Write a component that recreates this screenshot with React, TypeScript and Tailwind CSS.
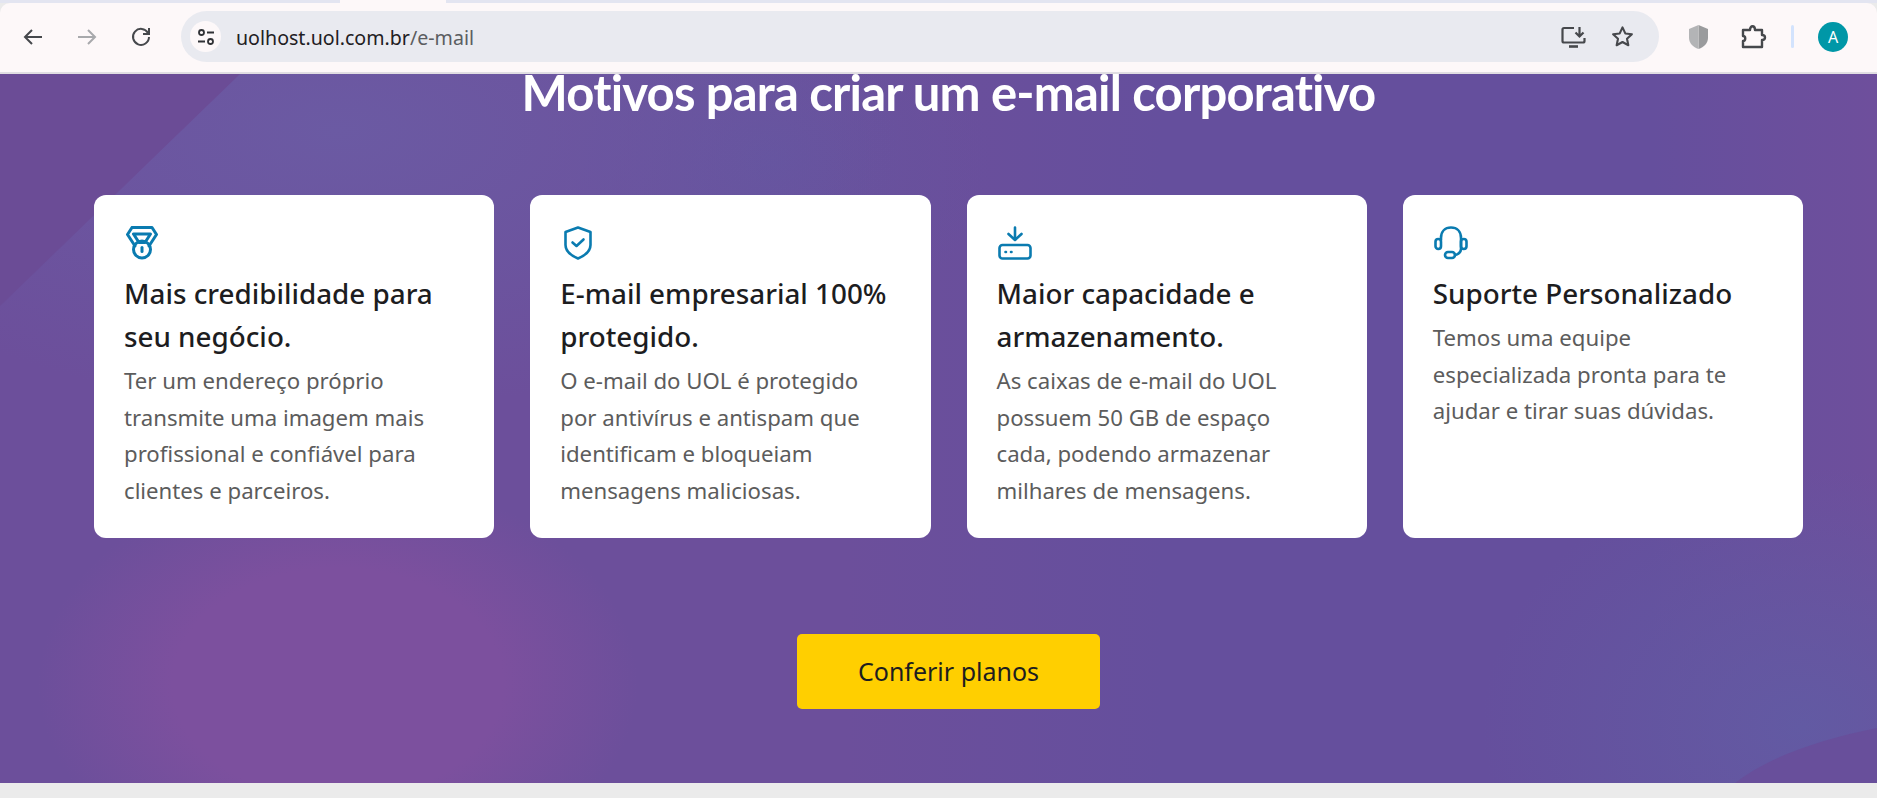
const cards = [
  {
    icon: "medal",
    title: "Mais credibilidade para\nseu negócio.",
    text: "Ter um endereço próprio\ntransmite uma imagem mais\nprofissional e confiável para\nclientes e parceiros.",
  },
  {
    icon: "shield",
    title: "E-mail empresarial 100%\nprotegido.",
    text: "O e-mail do UOL é protegido\npor antivírus e antispam que\nidentificam e bloqueiam\nmensagens maliciosas.",
  },
  {
    icon: "storage",
    title: "Maior capacidade e\narmazenamento.",
    text: "As caixas de e-mail do UOL\npossuem 50 GB de espaço\ncada, podendo armazenar\nmilhares de mensagens.",
  },
  {
    icon: "headset",
    title: "Suporte Personalizado",
    text: "Temos uma equipe\nespecializada pronta para te\najudar e tirar suas dúvidas.",
  },
];

const CardIcon = ({ name }: { name: string }) => {
  if (name === "medal") {
    return (
      <svg className="ml-[1px]" width="34" height="34" viewBox="0 0 34 34" fill="none" stroke="#0a7bb0" strokeWidth="3" strokeLinejoin="round" strokeLinecap="round">
        <path d="M7 1.500h20l4.500 7-7.500 11.500M10 20 2.500 8.500 7 1.500M8.500 8h17L20 16.500h-6z" />
        <circle cx="17" cy="23.500" r="8.500" />
        <path d="M17 21.500v4" />
      </svg>
    );
  }
  if (name === "shield") {
    return (
      <svg className="ml-[4px]" width="28" height="34" viewBox="0 0 28 34" fill="none" stroke="#0a7bb0" strokeWidth="2.600" strokeLinejoin="round" strokeLinecap="round">
        <path d="M14 1.500 26.500 6v13c0 6.500-5.500 10.500-12.500 13.500C7 29.500 1.500 25.500 1.500 19V6z" />
        <path d="m8.500 16.500 4 3.500 7-6.500" />
      </svg>
    );
  }
  if (name === "storage") {
    return (
      <svg className="ml-[1px]" width="34" height="34" viewBox="0 0 34 34" fill="none" stroke="#0a7bb0" strokeWidth="2.600" strokeLinejoin="round" strokeLinecap="round">
        <rect x="1.500" y="19" width="31" height="13.500" rx="3" />
        <path d="M17 1.500V13M10.500 8l6.500 6 6.500-6" />
        <path d="M7.500 26h.5M13 26h.5" />
      </svg>
    );
  }
  return (
    <svg className="ml-[1px]" width="34" height="34" viewBox="0 0 34 34" fill="none" stroke="#0a7bb0" strokeWidth="2.600" strokeLinejoin="round" strokeLinecap="round">
      <path d="M7 14v-2C7 5.500 11 1.500 17 1.500S27 5.500 27 12v11c0 3-3 5.500-6 6" />
      <rect x="1.500" y="13" width="5.500" height="10" rx="2.750" />
      <rect x="27" y="13" width="5.500" height="10" rx="2.750" />
      <rect x="11" y="26" width="10" height="6" rx="3" />
    </svg>
  );
};

export default function App() {
  return (
    <div className="flex h-screen flex-col overflow-hidden bg-[#ebebeb] font-['Noto_Sans',sans-serif]">
      {/* browser chrome */}
      <div className="relative h-[3px] bg-[#e3e5f1]">
        <div className="absolute left-[340px] top-0 h-[3px] w-[106px] bg-[#fdf8f9]" />
      </div>
      <header className="flex h-[71px] items-center rounded-t-[10px] border-b-2 border-[#e0dde2] bg-[#fdf8f9] pb-[2px]">
        <div className="flex w-[181px] items-center pl-[21px] text-[#46484c]">
          <svg width="24" height="24" viewBox="0 0 24 24" fill="none" stroke="currentColor" strokeWidth="2">
            <path d="M21 12H4M11 5l-7 7 7 7" />
          </svg>
          <svg className="ml-[30px] text-[#a8a9ac]" width="24" height="24" viewBox="0 0 24 24" fill="none" stroke="currentColor" strokeWidth="2">
            <path d="M3 12h17M13 5l7 7-7 7" />
          </svg>
          <svg className="ml-[30px]" width="24" height="24" viewBox="0 0 24 24" fill="none" stroke="currentColor" strokeWidth="2">
            <path d="M19 8a8 8 0 1 0 1 4" />
            <path d="M20 3v6h-6" />
          </svg>
        </div>
        <div className="flex h-[51px] w-[1478px] items-center rounded-full bg-[#e9eaf0] pl-[9px] pr-[25px]">
          <div className="flex h-[31px] w-[31px] items-center justify-center rounded-full bg-[#fdf8f9]">
            <svg width="18" height="18" viewBox="0 0 18 18" fill="none" stroke="#303236" strokeWidth="1.800">
              <circle cx="4.500" cy="4.500" r="2.500" />
              <path d="M10 4.500h7M1 13.500h7" />
              <circle cx="13.500" cy="13.500" r="2.500" />
            </svg>
          </div>
          <div className="ml-[15px] flex-1 pt-[2px] text-[19.600px] text-[#1f2023]">
            uolhost.uol.com.br<span className="text-[#5b5d61]">/e-mail</span>
          </div>
          <svg width="25" height="22" viewBox="0 0 25 22" fill="none" stroke="#46484c" strokeWidth="2.200">
            <path d="M13 2H3a1.500 1.500 0 0 0-1.500 1.500V15A1.500 1.500 0 0 0 3 16.500h19A1.500 1.500 0 0 0 23.500 15v-3" />
            <path d="M8 20.500h9" strokeWidth="2.600" />
            <path d="M18.500 1v9M14.500 6.500l4 4 4-4" />
          </svg>
          <svg className="ml-[25px]" width="23" height="23" viewBox="0 0 24 24" fill="none" stroke="#46484c" strokeWidth="2.200" strokeLinejoin="round">
            <path d="m12 2.500 2.900 6.300 6.900.8-5.100 4.700 1.400 6.800-6.100-3.400-6.100 3.400 1.400-6.800-5.100-4.700 6.900-.8z" />
          </svg>
        </div>
        <svg className="ml-[30px]" width="19" height="24" viewBox="0 0 19 24">
          <path d="M9.500 0 19 4v9c0 5-4 9-9.500 11z" fill="#9a9b9d" />
          <path d="M9.500 0 0 4v9c0 5 4 9 9.500 11z" fill="#b3b4b6" />
        </svg>
        <svg className="ml-[33px]" width="26" height="25" viewBox="0 0 26 25" fill="none" stroke="#46484c" strokeWidth="2.400" strokeLinejoin="round">
          <path d="M2 6h7c0-5 5-5 5 0h7v5c4 0 4 5 0 5v7H2v-6c3 0 3-5 0-5z" />
        </svg>
        <div className="ml-[24px] h-[23px] w-[3px] rounded-full bg-[#d3e3fd]" />
        <div className="ml-[24px] flex h-[30px] w-[30px] items-center justify-center rounded-full bg-[#0097a7] text-[16px] text-white">A</div>
      </header>

      {/* page */}
      <main className="relative flex-1 overflow-hidden bg-[#6c4f9b]">
        <div className="absolute inset-0 bg-[radial-gradient(ellipse_300px_210px_at_18%_86%,#7c509e_55%,transparent_100%),radial-gradient(ellipse_560px_280px_at_18%_8%,#6b5aa3_0%,transparent_100%),radial-gradient(ellipse_220px_180px_at_41%_12%,#65549f_0%,transparent_100%),radial-gradient(ellipse_320px_260px_at_96%_92%,#625aa3_0%,transparent_100%),linear-gradient(90deg,transparent_45%,#654f9d_62%,#654f9d_88%,#6e4f9c_100%)]" />
        <svg className="absolute inset-0" width="1877" height="709" viewBox="0 0 1877 709">
          <path d="M240 0H0V232z" fill="#6b4c96" />
          <path d="M1877 654c-60 12-110 30-142 55h142z" fill="#684f9b" />
        </svg>
        <div className="relative flex flex-col items-center pl-[94px] pr-[74px]">
          <h1 className="h-[121px] font-['Lato',sans-serif] text-[49px] font-bold leading-[36px] tracking-[-0.8px] text-white">
            Motivos para criar um e-mail corporativo
          </h1>
          <div className="grid w-full grid-cols-4 gap-[36px]">
            {cards.map((card) => (
              <div key={card.icon} className="h-[343px] rounded-[12px] bg-white px-[30px] pt-[31px]">
                <div className="h-[34px]">
                  <CardIcon name={card.icon} />
                </div>
                <h2 className="mt-[12px] whitespace-pre-line text-[27.800px] font-medium leading-[43px] text-[#1d1d1f]">
                  {card.title}
                </h2>
                <p className="mt-[5px] whitespace-pre-line text-[22.200px] leading-[36.500px] text-[#5c5c5c]">{card.text}</p>
              </div>
            ))}
          </div>
          <button className="mt-[96px] h-[75px] w-[303px] rounded-[5px] bg-[#ffcf00] text-[25px] text-[#1d1d1f]">
            Conferir planos
          </button>
        </div>
      </main>
      <div className="h-[15px]" />
    </div>
  );
}
